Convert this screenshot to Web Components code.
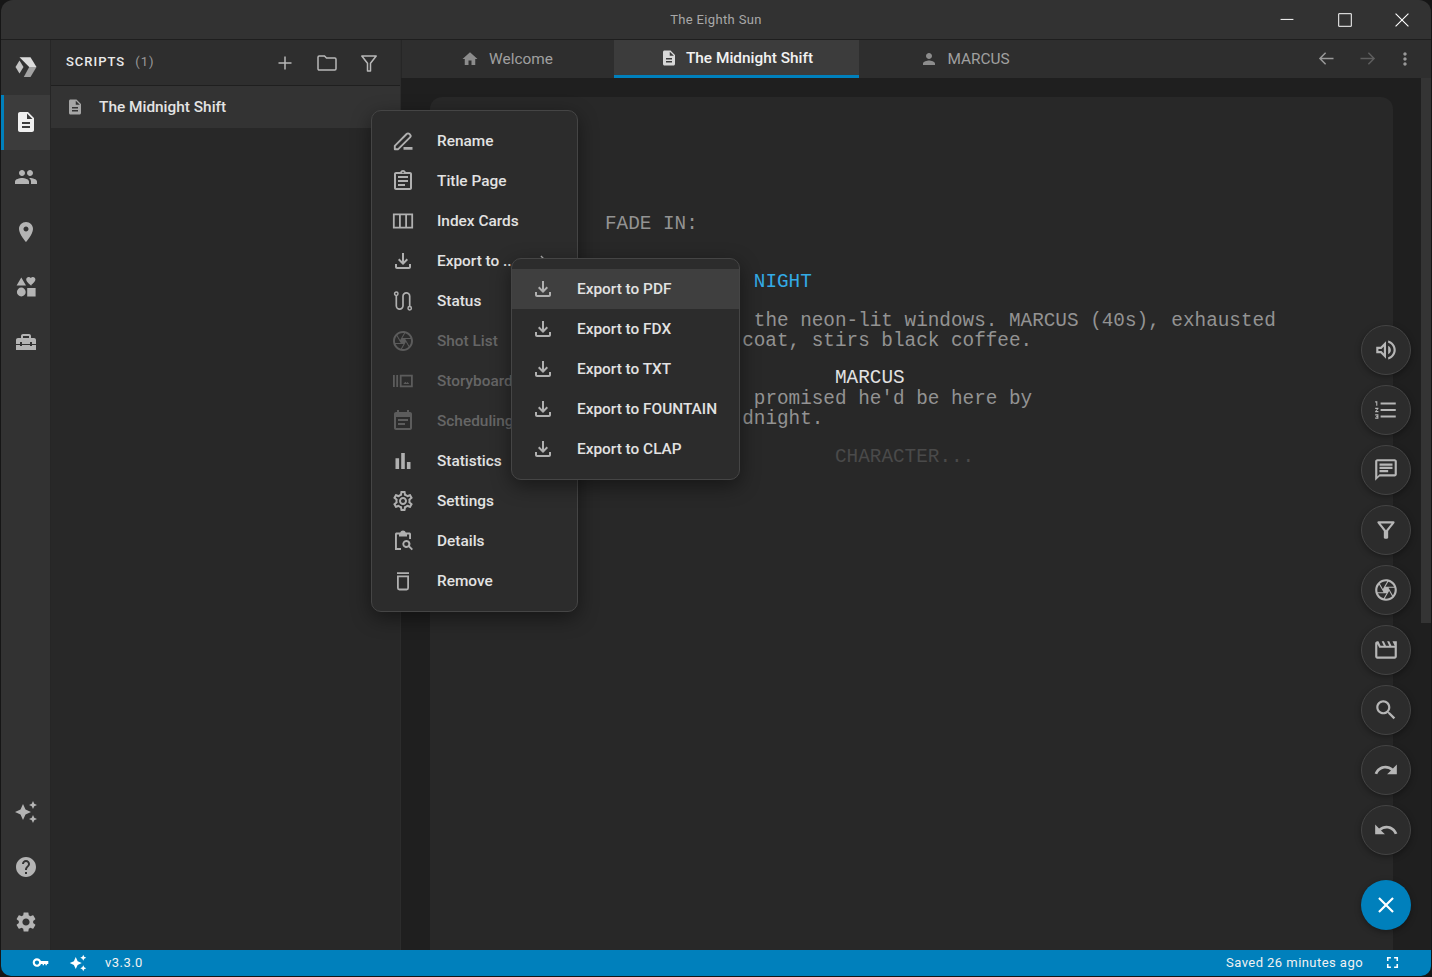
<!DOCTYPE html>
<html lang="en">
<head>
<meta charset="utf-8">
<title>The Eighth Sun</title>
<style>
html,body{margin:0;height:100%;background:#161616;overflow:hidden}
body{font-family:Roboto,"Liberation Sans",sans-serif;color:#ddd}
</style>
</head>
<body>
<app-shell></app-shell>
<script>
const CAMERA='<path d="M14.25 2.26l-.08-.04-.01.02C13.46 2.09 12.74 2 12 2 6.48 2 2 6.48 2 12s4.48 10 10 10 10-4.48 10-10c0-4.75-3.31-8.72-7.75-9.74zM19.41 9h-7.99l2.71-4.7c2.4.66 4.35 2.42 5.28 4.7zM13.1 4.08L10.27 9l-1.15 2L6.4 6.3C7.84 4.88 9.82 4 12 4c.37 0 .74.03 1.1.08zM5.7 7.09L8.54 12l1.15 2H4.26C4.1 13.36 4 12.69 4 12c0-1.85.64-3.55 1.7-4.91zM4.59 15h7.98l-2.71 4.7c-2.4-.67-4.34-2.42-5.27-4.7zm6.31 4.91L14.89 13l2.72 4.7C16.16 19.12 14.18 20 12 20c-.38 0-.74-.04-1.1-.09zm7.4-3l-4-6.91h5.43c.17.64.27 1.31.27 2 0 1.85-.64 3.55-1.7 4.91z"/>';
const ICONS={
description:'<path d="M14 2H6c-1.1 0-1.99.9-1.99 2L4 20c0 1.1.89 2 1.99 2H18c1.1 0 2-.9 2-2V8l-6-6zm2 16H8v-2h8v2zm0-4H8v-2h8v2zm-3-5V3.5L18.5 9H13z"/>',
people:'<path d="M16 11c1.66 0 2.99-1.34 2.99-3S17.66 5 16 5c-1.66 0-3 1.34-3 3s1.34 3 3 3zm-8 0c1.66 0 2.99-1.34 2.99-3S9.66 5 8 5C6.34 5 5 6.34 5 8s1.34 3 3 3zm0 2c-2.33 0-7 1.17-7 3.5V19h14v-2.5c0-2.33-4.67-3.5-7-3.5zm8 0c-.29 0-.62.02-.97.05 1.16.84 1.97 1.97 1.97 3.45V19h6v-2.5c0-2.33-4.67-3.5-7-3.5z"/>',
place:'<path d="M12 2C8.13 2 5 5.13 5 9c0 5.25 7 13 7 13s7-7.75 7-13c0-3.87-3.13-7-7-7zm0 9.5c-1.38 0-2.5-1.12-2.5-2.5s1.12-2.5 2.5-2.5 2.5 1.12 2.5 2.5-1.12 2.5-2.5 2.5z"/>',
shapes:'<path d="M7.3 2.6 12 10.6H2.6zM17.4 10.9l-1-.9c-2.6-2.3-4.2-3.7-4.2-5.5 0-1.4 1.1-2.5 2.5-2.5.8 0 1.6.4 2.1 1 .5-.6 1.3-1 2.1-1 1.4 0 2.5 1.1 2.5 2.5 0 1.8-1.6 3.2-4.2 5.5zM7.3 12.600a4.400 4.400 0 1 1 0 8.800 4.400 4.400 0 0 1 0-8.800zM13.200 13h8.400v8.400h-8.400z"/>',
toolbox:'<path d="M18 16H16V15H8V16H6V15H2V20H22V15H18V16M20 8H17V6C17 4.9 16.1 4 15 4H9C7.9 4 7 4.9 7 6V8H4C2.9 8 2 8.9 2 10V14H6V12H8V14H16V12H18V14H22V10C22 8.9 21.1 8 20 8M15 8H9V6H15V8Z"/>',
sparkle:'<path d="M19 9l1.25-2.75L23 5l-2.75-1.25L19 1l-1.25 2.75L15 5l2.75 1.25L19 9zm-7.5.5L9 4 6.5 9.5 1 12l5.5 2.5L9 20l2.5-5.5L17 12l-5.5-2.5zM19 15l-1.25 2.75L15 19l2.75 1.25L19 23l1.25-2.75L23 19l-2.75-1.25L19 15z"/>',
help:'<path d="M12 2C6.48 2 2 6.48 2 12s4.48 10 10 10 10-4.48 10-10S17.52 2 12 2zm1 17h-2v-2h2v2zm2.07-7.75l-.9.92C13.45 12.9 13 13.5 13 15h-2v-.5c0-1.1.45-2.1 1.17-2.83l1.24-1.26c.37-.36.59-.86.59-1.41 0-1.1-.9-2-2-2s-2 .9-2 2H8c0-2.21 1.79-4 4-4s4 1.79 4 4c0 .88-.36 1.68-.93 2.25z"/>',
gear:'<path d="M19.14 12.94c.04-.3.06-.61.06-.94 0-.32-.02-.64-.07-.94l2.03-1.58c.18-.14.23-.41.12-.61l-1.92-3.32c-.12-.22-.37-.29-.59-.22l-2.39.96c-.5-.38-1.03-.7-1.62-.94L14.4 2.81c-.04-.24-.24-.41-.48-.41h-3.84c-.24 0-.43.17-.47.41L9.25 5.35c-.59.24-1.13.57-1.62.94L5.24 5.33c-.22-.08-.47 0-.59.22L2.74 8.87c-.12.21-.08.47.12.61l2.03 1.58c-.05.3-.09.63-.09.94s.02.64.07.94l-2.03 1.58c-.18.14-.23.41-.12.61l1.92 3.32c.12.22.37.29.59.22l2.39-.96c.5.38 1.03.7 1.62.94l.36 2.54c.05.24.24.41.48.41h3.84c.24 0 .44-.17.47-.41l.36-2.54c.59-.24 1.13-.56 1.62-.94l2.39.96c.22.08.47 0 .59-.22l1.92-3.32c.12-.22.07-.47-.12-.61l-2.01-1.58zM12 15.6c-1.98 0-3.6-1.62-3.6-3.6s1.62-3.6 3.6-3.6 3.6 1.62 3.6 3.6-1.62 3.6-3.6 3.6z"/>',
gearo:'<path d="M19.43 12.98c.04-.32.07-.64.07-.98 0-.34-.03-.66-.07-.98l2.11-1.65c.19-.15.24-.42.12-.64l-2-3.46c-.09-.16-.26-.25-.44-.25-.06 0-.12.01-.17.03l-2.49 1c-.52-.4-1.08-.73-1.69-.98l-.38-2.65C14.46 2.18 14.25 2 14 2h-4c-.25 0-.46.18-.49.42l-.38 2.65c-.61.25-1.17.59-1.69.98l-2.49-1c-.06-.02-.12-.03-.18-.03-.17 0-.34.09-.43.25l-2 3.46c-.13.22-.07.49.12.64l2.11 1.65c-.04.32-.07.65-.07.98 0 .33.03.66.07.98l-2.11 1.65c-.19.15-.24.42-.12.64l2 3.46c.09.16.26.25.44.25.06 0 .12-.01.17-.03l2.49-1c.52.4 1.08.73 1.69.98l.38 2.65c.03.24.24.42.49.42h4c.25 0 .46-.18.49-.42l.38-2.65c.61-.25 1.17-.59 1.69-.98l2.49 1c.06.02.12.03.18.03.17 0 .34-.09.43-.25l2-3.46c.12-.22.07-.49-.12-.64l-2.11-1.65zm-1.98-1.71c.04.31.05.52.05.73 0 .21-.02.43-.05.73l-.14 1.13.89.7 1.08.84-.7 1.21-1.27-.51-1.04-.42-.9.68c-.43.32-.84.56-1.25.73l-1.06.43-.16 1.13-.2 1.35h-1.4l-.19-1.35-.16-1.13-1.06-.43c-.43-.18-.83-.41-1.23-.71l-.91-.7-1.06.43-1.27.51-.7-1.21 1.08-.84.89-.7-.14-1.13c-.03-.31-.05-.54-.05-.74s.02-.43.05-.73l.14-1.13-.89-.7-1.08-.84.7-1.21 1.27.51 1.04.42.9-.68c.43-.32.84-.56 1.25-.73l1.06-.43.16-1.13.2-1.35h1.39l.19 1.35.16 1.13 1.06.43c.43.18.83.41 1.23.71l.91.7 1.06-.43 1.27-.51.7 1.21-1.07.85-.89.7.14 1.13zM12 8c-2.21 0-4 1.79-4 4s1.79 4 4 4 4-1.79 4-4-1.79-4-4-4zm0 6c-1.1 0-2-.9-2-2s.9-2 2-2 2 .9 2 2-.9 2-2 2z"/>',
home:'<path d="M10 20v-6h4v6h5v-8h3L12 3 2 12h3v8z"/>',
person:'<path d="M12 12c2.21 0 4-1.79 4-4s-1.79-4-4-4-4 1.79-4 4 1.79 4 4 4zm0 2c-2.67 0-8 1.34-8 4v2h16v-2c0-2.66-5.33-4-8-4z"/>',
add:'<path d="M5.5 12h13M12 5.5v13" fill="none" stroke="currentColor" stroke-width="1.5"/>',
folder:'<path d="M3 6.2c0-.7.5-1.2 1.2-1.2h5.3l2 2h8.300c.7 0 1.200.5 1.200 1.200v9.600c0 .7-.5 1.200-1.200 1.200H4.200c-.7 0-1.200-.5-1.200-1.200z" fill="none" stroke="currentColor" stroke-width="1.5"/>',
filter:'<path d="M7 6h10l-5.01 6.3L7 6zM4.25 5.61C6.27 8.2 10 13 10 13v6c0 .55.45 1 1 1h2c.55 0 1-.45 1-1v-6s3.72-4.8 5.74-7.39C20.25 4.95 19.78 4 18.95 4H5.04c-.83 0-1.3.95-.79 1.61z"/>',
filterthin:'<path d="M4.8 5h14.400l-5.700 7.300V20h-3v-7.700z" fill="none" stroke="currentColor" stroke-width="1.5" stroke-linejoin="round"/>',
rename:'<path d="M3.800 20.200v-3.400L15.600 5c.8-.8 2-.8 2.800 0l.6.6c.8.8.8 2 0 2.800L7.200 20.200z" fill="none" stroke="currentColor" stroke-width="1.900" stroke-linejoin="round"/><path d="M12.500 18h9v2.800h-9z"/>',
clipboard:'<path d="M19 3h-4.180C14.400 1.840 13.300 1 12 1s-2.400.84-2.820 2H5c-1.100 0-2 .9-2 2v14c0 1.100.9 2 2 2h14c1.100 0 2-.9 2-2V5c0-1.100-.9-2-2-2zm-7-.25c.41 0 .75.34.75.75s-.34.75-.75.75-.75-.34-.75-.75.34-.75.75-.75zM19 19H5V5h14v14zM7 15h7v2H7zm0-4h10v2H7zm0-4h10v2H7z"/>',
columns:'<path d="M2.800 5.400h18.400v13.200H2.800zM8.900 5.400v13.200M15.100 5.400v13.200" fill="none" stroke="currentColor" stroke-width="1.800"/>',
download:'<path d="M18 15v3H6v-3H4v3c0 1.100.9 2 2 2h12c1.100 0 2-.9 2-2v-3h-2zm-1-4l-1.410-1.410L13 12.170V4h-2v8.170L8.410 9.590 7 11l5 5 5-5z"/>',
route:'<circle cx="5.300" cy="4.800" r="1.700" fill="none" stroke="currentColor" stroke-width="1.500"/><circle cx="18.700" cy="19.200" r="1.700" fill="none" stroke="currentColor" stroke-width="1.500"/><path d="M5.300 6.500v10.300a3.350 3.350 0 0 0 6.700 0V7.200a3.350 3.350 0 0 1 6.700 0V17.500" fill="none" stroke="currentColor" stroke-width="1.700"/>',
camera:CAMERA,
storyboard:'<path d="M2 6h1.800v12H2zM5.300 6h1.800v12H5.300zM8.800 5.800h13v12.400h-13z M10.600 7.600v8.800h9.400V7.600z" fill-rule="evenodd"/><path d="M12.300 15l2-2.200 1.300 1.200 1.100-1 1.500 2z"/>',
event:'<path d="M17 10H7v2h10v-2zm2-7h-1V1h-2v2H8V1H6v2H5c-1.110 0-1.990.9-1.990 2L3 19c0 1.100.89 2 2 2h14c1.100 0 2-.9 2-2V5c0-1.100-.9-2-2-2zm0 16H5V8h14v11zm-5-5H7v2h7v-2z"/>',
bars:'<path d="M4.500 9.200h3.600V20H4.500zM10.200 4h3.600v16h-3.600zM15.900 13h3.600v7h-3.600z"/>',
details:'<path d="M4 21V5.200c0-1 .7-1.700 1.700-1.700h3.500C9.600 2.300 10.700 1.500 12 1.500s2.400.8 2.800 2h3.500c1 0 1.700.7 1.700 1.700V10h-1.900V5.400H16V7.500H8V5.400H5.900v13.700H10V21z"/><path d="M15.300 11a4 4 0 1 0 2.300 7.300l3 3 1.400-1.400-3-3A4 4 0 0 0 15.300 11zm0 1.900a2.100 2.100 0 1 1 0 4.200 2.100 2.100 0 0 1 0-4.200z"/>',
trash:'<path d="M6 3.200h12v1.800H6z"/><path d="M6.900 7.400h10.200V19c0 .9-.6 1.500-1.500 1.500H8.400c-.9 0-1.500-.6-1.500-1.500z" fill="none" stroke="currentColor" stroke-width="1.800"/>',
chevron:'<path d="M9.500 6 15.500 12l-6 6" fill="none" stroke="currentColor" stroke-width="1.600"/>',
volume:'<path d="M3 9v6h4l5 5V4L7 9H3zm7-.17v6.340L7.830 13H5v-2h2.830L10 8.830zM16.500 12c0-1.770-1.020-3.290-2.500-4.030v8.050c1.480-.73 2.500-2.250 2.500-4.020z"/><path d="M14 3.230v2.060c2.890.86 5 3.540 5 6.710s-2.110 5.850-5 6.710v2.060c4.010-.91 7-4.490 7-8.770 0-4.280-2.990-7.860-7-8.770z"/>',
list:'<path d="M2 17h2v.5H3v1h1v.5H2v1h3v-4H2v1zm1-9h1V4H2v1h1v3zm-1 3h1.800L2 13.100v.9h3v-1H3.200L5 10.900V10H2v1zm5-6v2h14V5H7zm0 14h14v-2H7v2zm0-6h14v-2H7v2z"/>',
chat:'<path d="M20 2H4c-1.100 0-2 .9-2 2v18l4-4h14c1.100 0 2-.9 2-2V4c0-1.100-.9-2-2-2zm0 14H6l-2 2V4h16v12zM6 12h8v2H6zm0-3h12v2H6zm0-3h12v2H6z"/>',
movie:'<path d="M4 6.470 5.760 10H20v8H4V6.470M22 4h-4l2 4h-3l-2-4h-2l2 4h-3l-2-4H8l2 4H7L5 4H4c-1.100 0-1.990.9-1.990 2L2 18c0 1.100.9 2 2 2h16c1.100 0 2-.9 2-2V4z"/>',
search:'<path d="M15.500 14h-.79l-.28-.27C15.410 12.590 16 11.110 16 9.500 16 5.910 13.090 3 9.500 3S3 5.910 3 9.500 5.910 16 9.500 16c1.610 0 3.090-.59 4.230-1.570l.27.28v.79l5 4.990L20.490 19l-4.990-5zm-6 0C7.010 14 5 11.990 5 9.500S7.010 5 9.500 5 14 7.010 14 9.500 11.990 14 9.500 14z"/>',
redo:'<path d="M18.400 10.600C16.550 8.990 14.150 8 11.500 8c-4.650 0-8.580 3.030-9.960 7.220L3.900 16c1.050-3.190 4.050-5.500 7.600-5.500 1.950 0 3.730.72 5.120 1.880L13 16h9V7l-3.600 3.600z"/>',
undo:'<path d="M12.500 8c-2.650 0-5.050.99-6.900 2.600L2 7v9h9l-3.620-3.620c1.390-1.160 3.160-1.880 5.120-1.880 3.540 0 6.550 2.310 7.600 5.500l2.370-.78C21.080 11.030 17.150 8 12.500 8z"/>',
close:'<path d="M5.500 5.500l13 13M18.500 5.500l-13 13" fill="none" stroke="currentColor" stroke-width="2"/>',
back:'<path d="M20 12H5M11 5.500 4.500 12l6.500 6.500" fill="none" stroke="currentColor" stroke-width="1.700"/>',
forward:'<path d="M4 12h15M13 5.500l6.500 6.500-6.500 6.500" fill="none" stroke="currentColor" stroke-width="1.700"/>',
more:'<path d="M12 8c1.100 0 2-.9 2-2s-.9-2-2-2-2 .9-2 2 .9 2 2 2zm0 2c-1.100 0-2 .9-2 2s.9 2 2 2 2-.9 2-2-.9-2-2-2zm0 6c-1.100 0-2 .9-2 2s.9 2 2 2 2-.9 2-2-.9-2-2-2z"/>',
key:'<path d="M12.650 10C11.830 7.670 9.610 6 7 6c-3.310 0-6 2.690-6 6s2.690 6 6 6c2.610 0 4.830-1.670 5.650-4H15v2h2v-2h2v2h2v-2h2v-4H12.650zM7 15c-1.660 0-3-1.340-3-3s1.340-3 3-3 3 1.340 3 3-1.340 3-3 3z"/>',
fullscreen:'<path d="M7 14H5v5h5v-2H7v-3zm-2-4h2V7h3V5H5v5zm12 7h-3v2h5v-5h-2v3zM14 5v2h3v3h2V5h-5z"/>',
winmin:'<path d="M1 11h22" fill="none" stroke="currentColor" stroke-width="1.700"/>',
winmax:'<path d="M1.200 1.200h21.600v21.600H1.200z" fill="none" stroke="currentColor" stroke-width="1.700"/>',
winclose:'<path d="M1 1l22 22M23 1 1 23" fill="none" stroke="currentColor" stroke-width="1.900"/>',
logo:'<path d="M1.500 12 5.500 5.500 9.500 12 5.500 18.500z" fill="#c4c4c4"/><path d="M5.500 2.300h11L22.500 12H15.200z" fill="#dcdcdc"/><path d="M15.200 12h7.300l-6 10H9.800z" fill="#a2a2a2"/>'
};
class MIcon extends HTMLElement{
  connectedCallback(){
    if(this.shadowRoot)return;
    const s=this.getAttribute('size')||24;
    const r=this.attachShadow({mode:'open'});
    r.innerHTML=`<style>:host{display:inline-flex;width:${s}px;height:${s}px;flex:none;color:inherit}svg{width:100%;height:100%;display:block;fill:currentColor}</style><svg viewBox="0 0 24 24" aria-hidden="true">${ICONS[this.getAttribute('name')]||''}</svg>`;
  }
}
customElements.define('m-icon',MIcon);

function def(tag,html){
  customElements.define(tag,class extends HTMLElement{
    constructor(){super();this.attachShadow({mode:'open'}).innerHTML=html;}
  });
}

def('title-bar',`<style>
:host{display:grid;grid-template-columns:1fr auto 1fr;align-items:center;height:39px;background:#323232;border-bottom:1px solid #1e1e1e;border-radius:12px 12px 0 0;font-size:13px;color:#a8a8a8}
.t{grid-column:2;letter-spacing:.35px}
.c{grid-column:3;justify-self:end;display:flex;color:#fff}
.c span{width:57.500px;height:39px;display:flex;align-items:center;justify-content:center}
</style><div class="t">The Eighth Sun</div><div class="c"><span><m-icon name="winmin" size="14"></m-icon></span><span><m-icon name="winmax" size="14"></m-icon></span><span><m-icon name="winclose" size="14"></m-icon></span></div>`);

def('rail-item',`<style>
:host{display:flex;height:55px;align-items:center;justify-content:center;color:#b4b4b4;box-sizing:border-box;padding-bottom:2px}
:host([active]){background:#3c3c3c;color:#f0f0f0;border-left:3px solid #0080bc;padding-right:3px}
</style><slot></slot>`);

def('side-rail',`<style>
:host{display:flex;flex-direction:column;justify-content:space-between;background:#323232;border-right:1px solid #262626;min-height:0}
div{display:flex;flex-direction:column}
</style><div><slot name="top"></slot></div><div><slot name="bottom"></slot></div>`);

def('script-panel',`<style>
:host{display:flex;flex-direction:column;background:#282828;border-right:1px solid #2c2c2c;min-height:0}
header{height:45px;display:flex;align-items:center;padding:0 10px 0 15px;background:#2e2e2e;border-bottom:1px solid #1f1f1f;flex:none}
.s{font-size:13px;font-weight:500;letter-spacing:1px;color:#eaeaea;margin-top:-3px}
.n{font-size:13px;letter-spacing:1px;color:#999;margin:-3px 0 0 10px}
.a{margin-left:auto;display:flex;color:#b8b8b8}
.a span{width:42px;height:42px;display:flex;align-items:center;justify-content:center}
.row{height:42px;display:flex;align-items:center;background:#333;padding-left:15px;color:#e4e4e4;font-size:15.400px;font-weight:500;flex:none}
.row m-icon{color:#a6a6a6;margin-right:15px}
</style><header><span class="s">SCRIPTS</span><span class="n">(1)</span><div class="a"><span><m-icon name="add"></m-icon></span><span><m-icon name="folder"></m-icon></span><span><m-icon name="filterthin"></m-icon></span></div></header><div class="row"><m-icon name="description" size="18"></m-icon>The Midnight Shift</div>`);

def('tab-item',`<style>
:host{display:flex;align-items:center;justify-content:center;gap:9px;height:38px;box-sizing:border-box;color:#a0a0a0;font-size:15.400px;padding-bottom:1px}
:host([active]){background:#3c3c3c;color:#f2f2f2;border-bottom:3px solid #0080bc;padding-bottom:0;font-weight:500}
::slotted(m-icon){color:#8c8c8c}
:host([active]) ::slotted(m-icon){color:#d8d8d8}
</style><slot></slot>`);

def('tab-bar',`<style>
:host{display:flex;height:38px;background:#2e2e2e;flex:none;border-left:1px solid #262626}
.n{margin-left:auto;display:flex;color:#999;padding-right:8.500px}
.n span{width:41px;display:flex;align-items:center;justify-content:center;padding-bottom:1px}
.n span:last-child{width:35px}
.f{color:#5e5e5e}
</style><slot></slot><div class="n"><span><m-icon name="back" size="21"></m-icon></span><span class="f"><m-icon name="forward" size="21"></m-icon></span><span><m-icon name="more" size="20"></m-icon></span></div>`);

def('script-page',`<style>
:host{display:block;flex:1;margin:19px 38px 0 29px;background:#282828;border-radius:12px 12px 0 0;font:19.330px/19.450px "Liberation Mono",monospace;color:#939393;padding-top:118px;padding-left:175px;white-space:pre;min-height:0;overflow:hidden}
div{height:19.450px}
.h{color:#33abe6;margin-left:calc(13ch - 2px)}
.a1{margin-left:calc(13ch - 2px)}
.a2{margin-left:calc(12ch - 2px)}
.c{margin-left:230px;color:#e2e2e2;margin-top:18px}
.p{margin-left:230px;color:#4a4a4a}
.d1{margin-left:calc(114px + 3ch);margin-top:1.450px}
.d2{margin-left:calc(114px + 2ch)}
.g1{margin-top:39px}
.g2{margin-top:19.450px}
</style><div>FADE IN:</div><div class="h g1">NIGHT</div><div class="a1 g2">the neon-lit windows. MARCUS (40s), exhausted</div><div class="a2">coat, stirs black coffee.</div><div class="c">MARCUS</div><div class="d1">promised he'd be here by</div><div class="d2">dnight.</div><div class="p g2">CHARACTER...</div>`);

def('fab-button',`<style>
:host{display:flex;width:50px;height:50px;box-sizing:border-box;border-radius:50%;align-items:center;justify-content:center;background:#2c2c2c;border:1px solid #444;color:#b6b6b6;box-shadow:0 2px 6px rgba(0,0,0,.35)}
:host([primary]){background:#0080bc;border:0;color:#fff;margin-top:15px}
</style><slot></slot>`);

def('fab-stack',`<style>
:host{position:absolute;right:20px;bottom:20px;display:flex;flex-direction:column;gap:10px}
</style><slot></slot>`);

def('context-menu',`<style>
:host{position:absolute;display:block;box-sizing:border-box;background:#2c2c2c;border:1px solid #454545;border-radius:10px;padding:10px 0;box-shadow:0 6px 20px rgba(0,0,0,.45);overflow:hidden}
</style><slot></slot>`);

def('menu-item',`<style>
:host{display:flex;align-items:center;height:40px;padding-left:19px;color:#e2e2e2;font-size:15.400px;font-weight:500;white-space:nowrap;position:relative}
:host([disabled]){color:#666}
:host([hover]){background:#3f3f3f}
::slotted(m-icon){color:#b0b0b0;margin-right:22px}
:host([disabled]) ::slotted(m-icon){color:#5c5c5c}
::slotted(.chev){margin:0 0 0 auto!important;position:absolute;right:24px}
</style><slot></slot>`);

def('status-bar',`<style>
:host{display:flex;align-items:center;height:26px;background:#0080bc;border-radius:0 0 10px 10px;color:#f2f2f2;font-size:13px;letter-spacing:.45px;padding:0 29.500px 2px 31px;box-sizing:border-box}
m-icon{color:#fff;margin-top:1px}
.v{margin-left:18px}
.s{margin-left:auto;margin-right:19.500px}
.k{margin-right:20px}
</style><m-icon class="k" name="key" size="17"></m-icon><m-icon name="sparkle" size="18"></m-icon><span class="v">v3.3.0</span><span class="s">Saved 26 minutes ago</span><m-icon name="fullscreen" size="19"></m-icon>`);

customElements.define('app-shell',class extends HTMLElement{
  constructor(){
    super();
    const rail=(n,a='',slot='top')=>`<rail-item slot="${slot}" ${a}><m-icon name="${n}" size="24"></m-icon></rail-item>`;
    const it=(icon,label,attr='',extra='')=>`<menu-item ${attr}><m-icon name="${icon}"></m-icon>${label}${extra}</menu-item>`;
    this.attachShadow({mode:'open'}).innerHTML=`<style>
:host{display:flex;flex-direction:column;position:relative;width:1430px;height:976px;margin-left:1px}
.body{flex:1;display:grid;grid-template-columns:50px 350px 1fr;min-height:0;position:relative}
main{display:flex;flex-direction:column;background:#1f1f1f;min-height:0;position:relative}
.sb{position:absolute;right:0;top:38px;width:10px;height:545px;background:#343434}
.work{flex:1;display:flex;flex-direction:column;min-height:0}
.m1{left:370px;top:70px;width:207px;height:502px}
.m2{left:510px;top:218px;width:229px;height:222px;z-index:2}
</style>
<title-bar></title-bar>
<div class="body">
<side-rail>
${rail('logo')}${rail('description','active')}${rail('people')}${rail('place')}${rail('shapes')}${rail('toolbox')}
${rail('sparkle','','bottom')}${rail('help','','bottom')}${rail('gear','','bottom')}
</side-rail>
<script-panel></script-panel>
<main>
<tab-bar>
<tab-item style="width:212px;gap:10px;padding-right:2px"><m-icon name="home" size="18"></m-icon>Welcome</tab-item>
<tab-item active style="width:245px;gap:8px"><m-icon name="description" size="18"></m-icon>The Midnight Shift</tab-item>
<tab-item style="width:212px"><m-icon name="person" size="18"></m-icon>MARCUS</tab-item>
</tab-bar>
<div class="work"><script-page></script-page></div>
<div class="sb"></div>
<fab-stack>
${['volume','list','chat','filter','camera','movie','search','redo','undo'].map(n=>`<fab-button><m-icon name="${n}" size="26"></m-icon></fab-button>`).join('')}
<fab-button primary><m-icon name="close" size="26"></m-icon></fab-button>
</fab-stack>
</main>
<context-menu class="m1">
${it('rename','Rename')}${it('clipboard','Title Page')}${it('columns','Index Cards')}
${it('download','Export to ...','','<m-icon class="chev" name="chevron" size="20"></m-icon>')}
${it('route','Status')}${it('camera','Shot List','disabled')}${it('storyboard','Storyboard','disabled')}${it('event','Scheduling','disabled')}
${it('bars','Statistics')}${it('gearo','Settings')}${it('details','Details')}${it('trash','Remove')}
</context-menu>
<context-menu class="m2">
${it('download','Export to PDF','hover')}${it('download','Export to FDX')}${it('download','Export to TXT')}${it('download','Export to FOUNTAIN')}${it('download','Export to CLAP')}
</context-menu>
</div>
<status-bar></status-bar>`;
  }
});
</script>
</body>
</html>
